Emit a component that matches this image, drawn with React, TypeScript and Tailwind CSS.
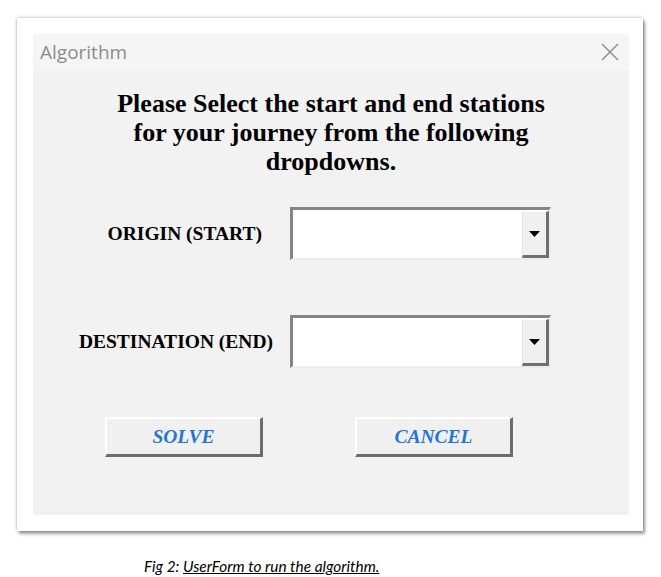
import React from 'react';

// 콤보박스 (VBA UserForm 스타일)
const ComboBox = () => (
  <div className="w-[261px] h-[53px] flex bg-white border-t-[3px] border-l-[3px] border-t-[#858585] border-l-[#858585] border-r-2 border-b-2 border-r-[#ececec] border-b-[#ececec]">
    <div className="flex-1" />
    <div className="w-[27px] mt-[1px] flex items-center justify-center bg-[#f0f0f0] border-l border-t border-l-[#e2e2e2] border-t-white border-r-[3px] border-b-[3px] border-r-[#6f6f6f] border-b-[#6f6f6f]">
      <svg width="11" height="6" viewBox="0 0 11 6">
        <path d="M0 0 H11 L5.5 6 Z" fill="#000" />
      </svg>
    </div>
  </div>
);

const FormButton = ({ label }: { label: string }) => (
  <button className="w-[158px] h-[40px] bg-[#f0f0f0] border-t-2 border-l-2 border-t-white border-l-white border-r-[3px] border-b-[3px] border-r-[#6c6c6c] border-b-[#6c6c6c] text-[#1f76d6] font-bold italic text-[19.5px] font-['Liberation_Serif',serif]">
    {label}
  </button>
);

export default function App() {
  return (
    <div className="w-[661px] h-[577px] bg-white overflow-hidden">
      <div className="pt-[18px] pl-[17px]">
        <div className="w-[626px] h-[513px] bg-white pt-[16px] pl-[16px] shadow-[0_0_3px_rgba(0,0,0,0.35),2px_3px_3px_rgba(0,0,0,0.35)]">
          <div className="w-[596px] h-[481px] bg-[#f2f2f2]">
            {/* 제목 표시줄 */}
            <div className="h-[36px] bg-[#f5f5f5] flex items-center justify-between pl-[7px] pr-[10px]">
              <span className="text-[19px] text-[#8c8c8c] font-['Open_Sans',sans-serif]">Algorithm</span>
              <svg width="18" height="18" viewBox="0 0 18 18">
                <path d="M1 1 L17 17 M17 1 L1 17" stroke="#8a8a8a" strokeWidth="1.4" />
              </svg>
            </div>

            <h1 className="mt-[19px] text-center text-[26px] leading-[29px] font-bold text-black font-['Liberation_Serif',serif]">
              Please Select the start and end stations<br />
              for your journey from the following<br />
              dropdowns.
            </h1>

            {/* 출발역 */}
            <div className="mt-[31px] flex items-center">
              <div className="w-[257px] pr-[28px] text-right text-[19.5px] font-bold font-['Liberation_Serif',serif] text-black">
                ORIGIN (START)
              </div>
              <ComboBox />
            </div>

            {/* 도착역 */}
            <div className="mt-[55px] flex items-center">
              <div className="w-[257px] pr-[17px] text-right text-[19.5px] font-bold font-['Liberation_Serif',serif] text-black">
                DESTINATION (END)
              </div>
              <ComboBox />
            </div>

            <div className="mt-[49px] pl-[72px] flex gap-[92px]">
              <FormButton label="SOLVE" />
              <FormButton label="CANCEL" />
            </div>
          </div>
        </div>
      </div>

      <p className="mt-[24px] pl-[144px] text-[15.4px] italic text-black font-['Lato',sans-serif]">
        Fig 2: <span className="underline">UserForm to run the algorithm.</span>
      </p>
    </div>
  );
}
